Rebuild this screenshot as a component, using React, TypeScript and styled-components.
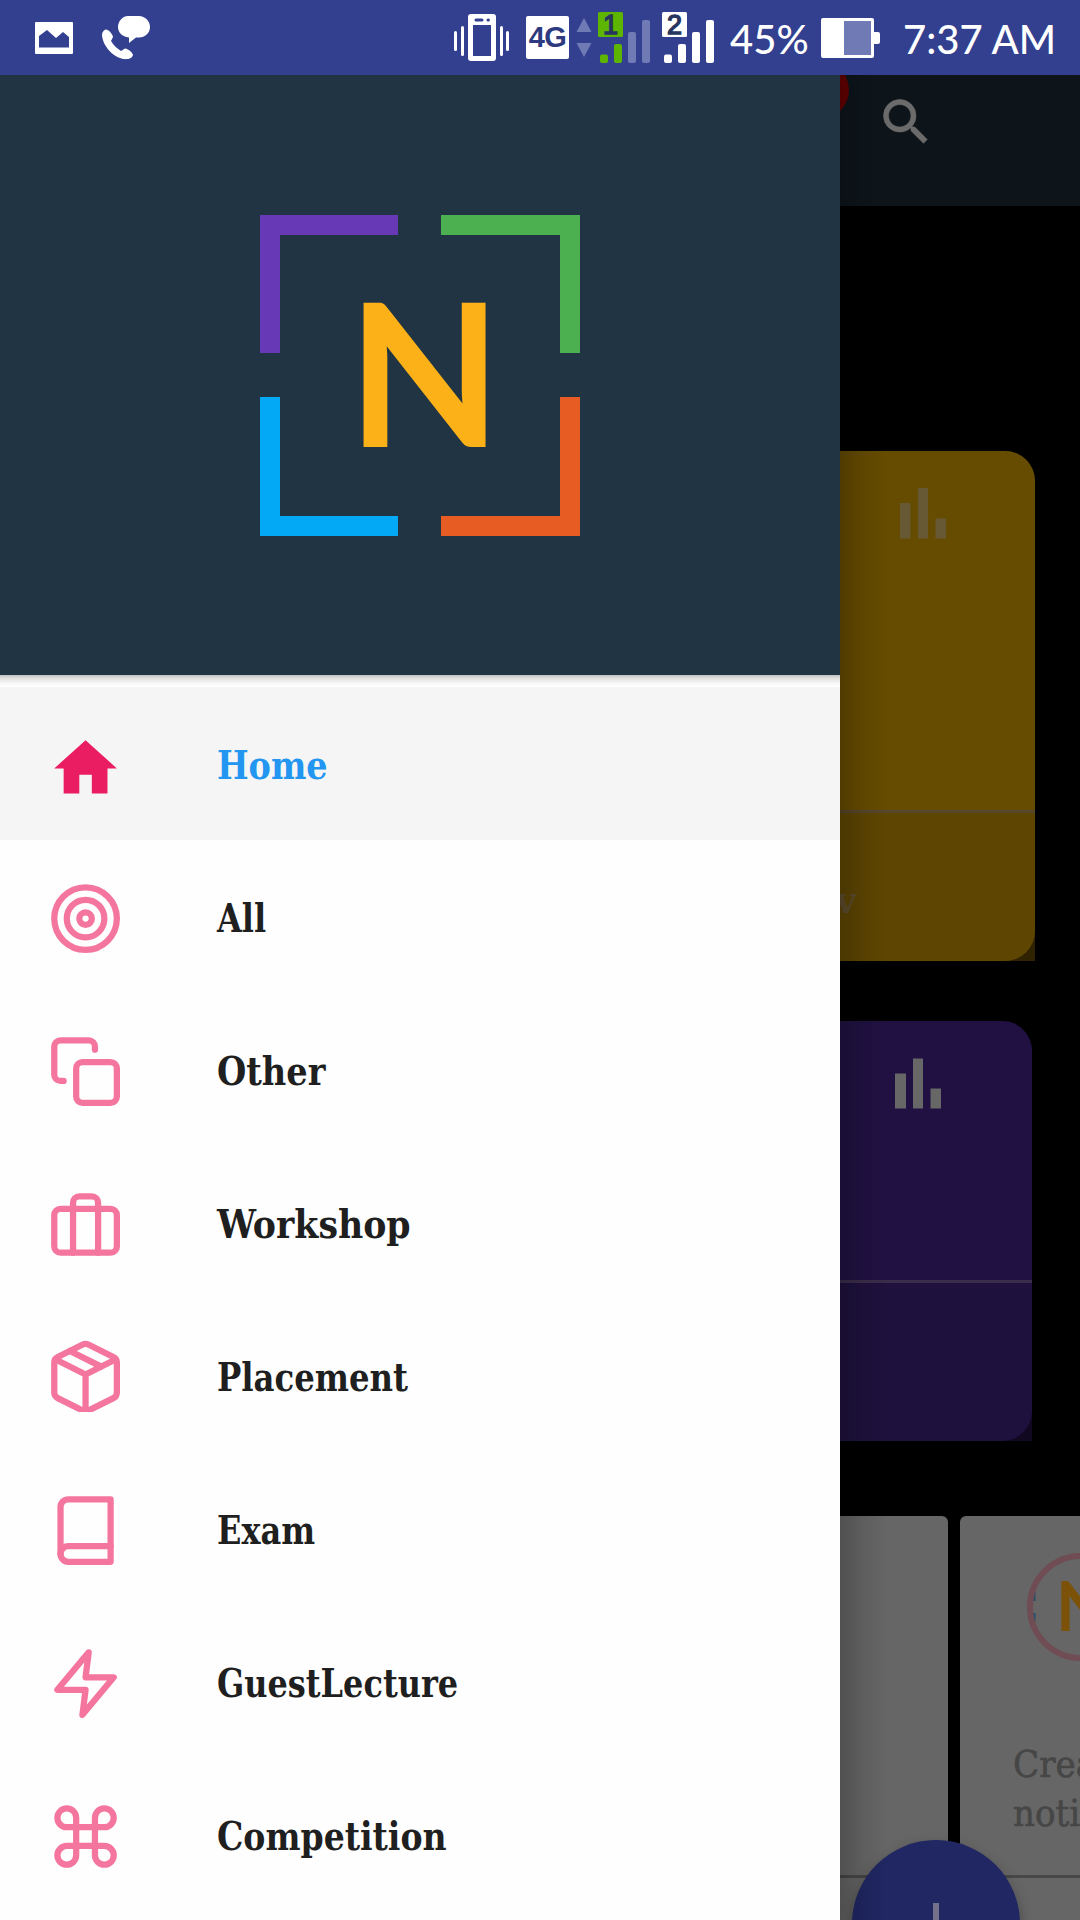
import React from "react";
import styled, { createGlobalStyle } from "styled-components";

const serif = `"DejaVu Serif Condensed", "DejaVu Serif", serif`;

const GlobalStyle = createGlobalStyle`
  * { box-sizing: border-box; }
  body { margin: 0; background: #000; }
`;

const Screen = styled.div`
  width: 1080px;
  height: 1920px;
  overflow: hidden;
  display: flex;
  flex-direction: column;
  background: #000;
`;

const StatusBar = styled.header`
  height: 75px;
  flex: none;
  display: flex;
  align-items: flex-start;
  background: #334090;
  color: #fff;
`;

const Glyph = styled.svg<{ $gap?: number }>`
  display: block;
  flex: none;
  margin-left: ${(p) => p.$gap ?? 0}px;
`;

const NetworkBadge = styled.div`
  width: 43px;
  height: 43px;
  margin: 16px 0 0 15px;
  flex: none;
  display: flex;
  align-items: center;
  justify-content: center;
  border-radius: 2px;
  background: #fff;
  color: #2d3a80;
  font: bold 29px/43px "Liberation Sans", sans-serif;
  letter-spacing: -0.5px;
`;

const StatusText = styled.span<{ $width: number; $gap: number; $stretch: number }>`
  flex: none;
  width: ${(p) => p.$width}px;
  margin-left: ${(p) => p.$gap}px;
  padding-top: 14px;
  font: 500 40px/50px Lato, sans-serif;
  white-space: nowrap;
  transform: scaleX(${(p) => p.$stretch});
  transform-origin: left;
`;

const Body = styled.div`
  flex: 1;
  min-height: 0;
  display: flex;
`;

const Drawer = styled.aside`
  width: 840px;
  flex: none;
  display: flex;
  flex-direction: column;
  background: #fefefe;
`;

const DrawerHeader = styled.div`
  height: 600px;
  flex: none;
  display: flex;
  align-items: center;
  justify-content: center;
  background: #213444;
`;

const HeaderShadow = styled.div`
  height: 12px;
  flex: none;
  background: linear-gradient(#c3c3c5, #e2e2e3 30%, #f8f8f8 70%, #fff);
`;

const MenuItem = styled.a<{ $active?: boolean }>`
  height: 153px;
  flex: none;
  display: flex;
  align-items: center;
  padding-left: 48px;
  gap: 97px;
  background: ${(p) => (p.$active ? "#f5f5f5" : "transparent")};
  color: ${(p) => (p.$active ? "#2296f0" : "#1f1f1f")};
`;

const MenuIcon = styled.svg`
  width: 72px;
  height: 72px;
  flex: none;
  fill: none;
  stroke: #f4769f;
  stroke-width: 2;
  stroke-linecap: round;
  stroke-linejoin: round;
`;

const MenuLabel = styled.span<{ $stretch: number }>`
  padding-top: 2px;
  font: bold 40px/50px ${serif};
  white-space: nowrap;
  transform: scaleX(${(p) => p.$stretch});
  transform-origin: left;
`;

const Backdrop = styled.main`
  position: relative;
  flex: 1;
  min-width: 0;
  overflow: hidden;
  display: flex;
  flex-direction: column;
  background: #000;
`;

const DrawerEdgeShadow = styled.div`
  position: absolute;
  top: 0;
  bottom: 0;
  left: 0;
  width: 48px;
  background: linear-gradient(90deg, rgba(0, 0, 0, 0.22), rgba(0, 0, 0, 0.08) 50%, transparent);
`;

const AppBar = styled.div`
  position: relative;
  height: 131px;
  flex: none;
  padding: 17px 0 0 36px;
  overflow: hidden;
  background: #0d151b;
`;

const CountBadge = styled.div`
  position: absolute;
  left: -49px;
  top: -14px;
  width: 58px;
  height: 58px;
  border-radius: 50%;
  background: #660000;
`;

const CardFrame = styled.section<{ $w: number; $top: number; $corner: string }>`
  width: ${(p) => p.$w}px;
  margin-top: ${(p) => p.$top}px;
  flex: none;
  border-top-right-radius: 30px;
  background: ${(p) => p.$corner};
`;

const Card = styled.div`
  display: flex;
  flex-direction: column;
  border-radius: 0 30px 30px 0;
  overflow: hidden;
`;

const CardBody = styled.div<{ $h: number; $bg: string }>`
  height: ${(p) => p.$h}px;
  background: ${(p) => p.$bg};
`;

const CardFooter = styled.div<{ $h: number; $bg: string; $line: string }>`
  height: ${(p) => p.$h}px;
  border-top: 3px solid ${(p) => p.$line};
  background: ${(p) => p.$bg};
`;

const FooterText = styled.span`
  display: block;
  margin: 62px 0 0 -4px;
  color: #5e4e2d;
  font: bold 38px/50px ${serif};
`;

const TileRow = styled.div`
  display: flex;
  gap: 12px;
  flex: 1;
  margin-top: 75px;
`;

const Tile = styled.div<{ $w: number; $radius: string }>`
  width: ${(p) => p.$w}px;
  flex: none;
  display: flex;
  flex-direction: column;
  overflow: hidden;
  border-radius: ${(p) => p.$radius};
  background: #666;
`;

const TileContent = styled.div`
  height: 359px;
  flex: none;
`;

const TileDivider = styled.div`
  height: 3px;
  flex: none;
  background: #484848;
`;

const TileText = styled.p`
  margin: 62px 0 0 53px;
  color: #464646;
  font: 38px/49px ${serif};
  -webkit-text-stroke: 0.6px #464646;
  white-space: pre;
`;

const Fab = styled.button`
  position: absolute;
  left: 12px;
  top: 1765px;
  width: 168px;
  height: 168px;
  padding: 0;
  border: 0;
  border-radius: 50%;
  display: flex;
  align-items: center;
  justify-content: center;
  background: #202762;
  box-shadow: 0 6px 14px rgba(0, 0, 0, 0.3);
`;

const items = [
  { label: "Home", stretch: 0.93, icon: "home" },
  { label: "All", stretch: 0.89, icon: "target" },
  { label: "Other", stretch: 0.935, icon: "copy" },
  { label: "Workshop", stretch: 0.965, icon: "case" },
  { label: "Placement", stretch: 0.898, icon: "package" },
  { label: "Exam", stretch: 0.89, icon: "book" },
  { label: "GuestLecture", stretch: 0.888, icon: "zap" },
  { label: "Competition", stretch: 0.92, icon: "command" },
];

const icons: Record<string, React.ReactNode> = {
  home: <path d="M10 20.9v-6h4v6h5v-8h3L12 3.9 2 12.9h3v8z" fill="#ea1d63" stroke="none" />,
  target: (
    <>
      <circle cx="12" cy="12" r="10" />
      <circle cx="12" cy="12" r="6" />
      <circle cx="12" cy="12" r="2" />
    </>
  ),
  copy: (
    <>
      <rect x="9" y="9" width="13" height="13" rx="2" />
      <path d="M5 15H4a2 2 0 0 1-2-2V4a2 2 0 0 1 2-2h9a2 2 0 0 1 2 2v1" />
    </>
  ),
  case: (
    <>
      <rect x="2" y="7" width="20" height="14" rx="2" />
      <path d="M16 21V5a2 2 0 0 0-2-2h-4a2 2 0 0 0-2 2v16" />
    </>
  ),
  package: (
    <>
      <path d="M12.89 1.45l8 4A2 2 0 0 1 22 7.24v9.53a2 2 0 0 1-1.11 1.79l-8 4a2 2 0 0 1-1.79 0l-8-4a2 2 0 0 1-1.1-1.8V7.24a2 2 0 0 1 1.11-1.79l8-4a2 2 0 0 1 1.78 0z" />
      <path d="M2.32 6.16L12 11l9.68-4.84M12 22.76V11M7 3.5l10 5" />
    </>
  ),
  book: (
    <>
      <path d="M4 19.5A2.5 2.5 0 0 1 6.5 17H20" />
      <path d="M6.5 2H20v20H6.5A2.5 2.5 0 0 1 4 19.5v-15A2.5 2.5 0 0 1 6.5 2z" />
    </>
  ),
  zap: <path d="M13 2L3 14h9l-1 8 10-12h-9l1-8z" />,
  command: (
    <path d="M18 3a3 3 0 0 0-3 3v12a3 3 0 1 0 3-3H6a3 3 0 1 0 3 3V6a3 3 0 1 0-3 3h12a3 3 0 0 0 0-6z" />
  ),
};

function Signal({ sim, color, idle }: { sim: string; color: string; idle: string }) {
  return (
    <Glyph width="54" height="66" viewBox="0 0 54 66" $gap={sim === "1" ? 5 : 10}>
      <rect x="1" y="12" width="25" height="25" rx="1.5" fill={color} />
      <text x="13.5" y="34" textAnchor="middle" fontFamily="Liberation Sans, sans-serif" fontSize="27" fill="#27365f" stroke="#27365f" strokeWidth="1.4">
        {sim}
      </text>
      <rect x="3" y="54.5" width="8" height="8.5" rx="2" fill={color} />
      <rect x="17" y="44" width="8" height="19" rx="2" fill={color} />
      <rect x="31" y="32" width="8" height="31" rx="2" fill={idle} />
      <rect x="45" y="20" width="8" height="43" rx="2" fill={idle} />
    </Glyph>
  );
}

function Logo() {
  return (
    <svg width="320" height="321" viewBox="0 0 320 321">
      <path d="M0 0H138V20H20V138H0z" fill="#6739b6" />
      <path d="M181 0H320V138H300V20H181z" fill="#4caf50" />
      <path d="M0 182H20V301H138V321H0z" fill="#03a9f4" />
      <path d="M300 182H320V321H181V301H300z" fill="#e65c22" />
      <text x="164.5" y="232" textAnchor="middle" fontFamily="Lato, sans-serif" fontWeight="700" fontSize="200" fill="#fbb117">
        N
      </text>
    </svg>
  );
}

export default function App() {
  return (
    <Screen>
      <GlobalStyle />
      <StatusBar>
        <Glyph width="40" height="66" viewBox="0 0 40 66" $gap={34}>
          <path fillRule="evenodd" fill="#fff" d="M2 22H38a1 1 0 0 1 1 1V53a1 1 0 0 1-1 1H2a1 1 0 0 1-1-1V23a1 1 0 0 1 1-1zM5 36V47.500H35V37L29 32 22 38 13 30z" />
        </Glyph>
        <Glyph width="50" height="66" viewBox="0 0 50 66" $gap={27} fill="#fff">
          <path d="M27 16H38C44 16 49 21 49 27S44 37.500 38 37.500H35L28 43V37.500C21 37 17 32 17 27S21 16 27 16z" />
          <path d="M5 29.500C8 29.500 12 35 12 37L10 41C13 46 17 49 20 51L24 48.500C27 48.500 32 53 32 55C31 59 26 59.500 22 59C10 56 1 44 1 34Q2 30 5 29.500z" />
        </Glyph>
        <Glyph width="58" height="66" viewBox="0 0 58 66" $gap={302}>
          <g fill="#fff">
            <rect x="1" y="31" width="3" height="20" rx="1.500" />
            <rect x="8" y="26" width="3" height="30" rx="1.500" />
            <rect x="47" y="26" width="3" height="30" rx="1.500" />
            <rect x="53" y="31" width="3" height="20" rx="1.500" />
            <rect x="15" y="14" width="28" height="47" rx="3" />
          </g>
          <path fill="#334090" d="M20 25H38V56H20z" />
          <path stroke="#334090" strokeWidth="3" strokeLinecap="round" d="M23 20h6M35 20h.4" />
        </Glyph>
        <NetworkBadge>4G</NetworkBadge>
        <Glyph width="16" height="66" viewBox="0 0 16 66" $gap={7} fill="#707bb5">
          <path d="M8 18L15.500 32H.5zM.5 43H15.500L8 57z" />
        </Glyph>
        <Signal sim="1" color="#5db500" idle="#707bb5" />
        <Signal sim="2" color="#fff" idle="#fff" />
        <StatusText $width={78} $gap={15} $stretch={1}>45%</StatusText>
        <Glyph width="60" height="66" viewBox="0 0 60 66" $gap={13}>
          <path fill="#fff" d="M2 18H51a2 2 0 0 1 2 2V32h4a2 2 0 0 1 2 2v8a2 2 0 0 1-2 2h-4V56a2 2 0 0 1-2 2H2a2 2 0 0 1-2-2V20a2 2 0 0 1 2-2z" />
          <path fill="#707bb5" d="M23 21H50V55H23z" />
        </Glyph>
        <StatusText $width={152} $gap={22} $stretch={1}>7:37 AM</StatusText>
      </StatusBar>

      <Body>
        <Drawer>
          <DrawerHeader>
            <Logo />
          </DrawerHeader>
          <HeaderShadow />
          {items.map((item, i) => (
            <MenuItem key={item.label} $active={i === 0}>
              <MenuIcon viewBox="0 0 23 23">{icons[item.icon]}</MenuIcon>
              <MenuLabel $stretch={item.stretch}>{item.label}</MenuLabel>
            </MenuItem>
          ))}
        </Drawer>

        <Backdrop>
          <AppBar>
            <CountBadge />
            <svg width="60" height="60" viewBox="0 0 24 24" fill="#6b6b6b" stroke="#6b6b6b" strokeWidth=".25">
              <path d="M15.500 14h-.79l-.28-.27A6.471 6.471 0 0 0 16 9.500 6.500 6.500 0 1 0 9.500 16c1.610 0 3.090-.59 4.230-1.570l.27.28v.79l5 4.990L20.490 19l-4.990-5zm-6 0C7.010 14 5 11.990 5 9.500S7.010 5 9.500 5 14 7.010 14 9.500 11.990 14 9.500 14z" />
            </svg>
          </AppBar>

          <CardFrame $w={195} $top={245} $corner="#302301">
            <Card>
              <CardBody $h={359} $bg="#664c00">
                <Glyph width="110" height="90" viewBox="0 0 110 90" fill="#675934">
                  <path d="M60 52h10.500V87.500H60zM78 37h10V87.500H78zM95.500 67.500H106V87.500H95.500z" />
                </Glyph>
              </CardBody>
              <CardFooter $h={151} $bg="#5e4602" $line="#56472b">
                <FooterText>v</FooterText>
              </CardFooter>
            </Card>
          </CardFrame>

          <CardFrame $w={192} $top={60} $corner="#100820">
            <Card>
              <CardBody $h={259} $bg="#201142">
                <Glyph width="110" height="90" viewBox="0 0 110 90" fill="#676767">
                  <path d="M55 52.500h11V87.500H55zM73 37.500h10V87.500H73zM90.500 67.500H101V87.500H90.500z" />
                </Glyph>
              </CardBody>
              <CardFooter $h={161} $bg="#1e113d" $line="#3a2d4b" />
            </Card>
          </CardFrame>

          <TileRow>
            <Tile $w={108} $radius="0 6px 0 0">
              <TileContent />
              <TileDivider />
            </Tile>
            <Tile $w={120} $radius="6px 0 0 0">
              <TileContent>
                <Glyph width="120" height="162" viewBox="0 0 120 162">
                  <path d="M73.500 76v9M73.500 97v8" stroke="#294f6b" strokeWidth="4" />
                  <circle cx="121" cy="91" r="51" fill="none" stroke="#704c54" strokeWidth="6" />
                  <text x="96" y="115" fontFamily="Lato, sans-serif" fontWeight="700" fontSize="68" fill="#7b5207">
                    N
                  </text>
                </Glyph>
                <TileText>{"Crea\nnoti"}</TileText>
              </TileContent>
              <TileDivider />
            </Tile>
          </TileRow>

          <Fab aria-label="Add">
            <svg width="42" height="42" viewBox="0 0 42 42">
              <path d="M18 0h6v18h18v6H24v18h-6V24H0v-6h18z" fill="#737288" />
            </svg>
          </Fab>
          <DrawerEdgeShadow />
        </Backdrop>
      </Body>
    </Screen>
  );
}
